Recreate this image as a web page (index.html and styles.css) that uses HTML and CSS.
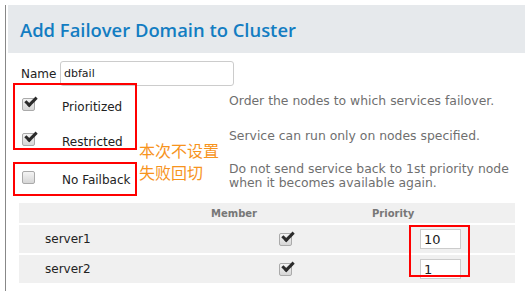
FILE: index.html
```html
<!DOCTYPE html>
<html lang="zh-CN">
<head>
  <meta charset="UTF-8">
  <title>Add Failover Domain to Cluster</title>
  <link rel="stylesheet" href="styles.css">
</head>
<body>
  <div class="panel">
    <div class="panel-header">
      <h1>Add Failover Domain to Cluster</h1>
    </div>

    <form class="domain-form">
      <div class="name-row">
        <label for="name">Name</label>
        <input type="text" id="name" class="name-input" value="dbfail">
      </div>

      <div class="opt">
        <span class="cb checked"></span>
        <span class="opt-label">Prioritized</span>
        <span class="opt-desc">Order the nodes to which services failover.</span>
      </div>
      <div class="opt">
        <span class="cb checked"></span>
        <span class="opt-label">Restricted</span>
        <span class="opt-desc">Service can run only on nodes specified.</span>
      </div>
      <div class="opt opt-last">
        <span class="cb"></span>
        <span class="opt-label">No Failback</span>
        <span class="opt-desc">Do not send service back to 1st priority node<br>when it becomes available again.</span>
      </div>

      <div class="members">
        <div class="mrow mhead">
          <div class="c-name"></div>
          <div class="c-member">Member</div>
          <div class="c-prio">Priority</div>
        </div>
        <div class="mrow">
          <div class="c-name">server1</div>
          <div class="c-member"><span class="cb checked"></span></div>
          <div class="c-prio"><input type="text" class="prio-input" value="10"></div>
        </div>
        <div class="mrow">
          <div class="c-name">server2</div>
          <div class="c-member"><span class="cb checked"></span></div>
          <div class="c-prio"><input type="text" class="prio-input" value="1"></div>
        </div>
      </div>
    </form>
  </div>

  <!-- annotations drawn over the screenshot -->
  <div class="mark mark-opts"></div>
  <div class="mark mark-failback"></div>
  <div class="mark mark-prio"></div>
  <div class="note">本次不设置<br>失败回切</div>
</body>
</html>
```

FILE: styles.css
```css
body {
  margin: 0;
  padding: 5px 0 0 5px;
  position: relative;
  font-family: "DejaVu Sans", sans-serif;
  color: #222;
  background: #fff;
}
.panel {
  border-left: 1px solid #888;
  min-height: 290px;
}
.panel-header {
  background-color: #e6e9ec;
  margin-left: 2px;
  height: 48px;
  display: flex;
  align-items: center;
  padding-left: 12px;
}
h1 {
  margin: 0;
  font-family: "Open Sans", sans-serif;
  font-weight: 600;
  font-size: 18.4px;
  color: #137dc2;
}
.domain-form {
  padding: 8px 9px 0 14px;
}
.name-row {
  display: flex;
  align-items: center;
  padding-left: 1px;
}
.name-row label {
  font-size: 12px;
  width: 39px;
}
.name-input {
  width: 174px;
  height: 25px;
  box-sizing: border-box;
  border: 1px solid #ccc;
  border-radius: 3px;
  padding: 0 3px;
  font-family: "DejaVu Sans", sans-serif;
  font-size: 11px;
  color: #222;
}

.opt {
  display: flex;
  align-items: flex-start;
  height: 35px;
}
.opt .cb {
  margin: 12px 0 0 2px;
}
.opt-label {
  width: 167px;
  margin: 14px 0 0 27px;
  font-size: 12px;
  line-height: 14px;
}
.opt-desc {
  margin-top: 8px;
  font-size: 12.4px;
  line-height: 14px;
  color: #6f6f6f;
}
.opt-last {
  height: 39px;
  margin-top: 4px;
}
.opt-last .cb {
  margin-top: 11px;
}
.opt-last .opt-label {
  margin-top: 13px;
}
.opt-last .opt-desc {
  margin-top: 2px;
}

/* checkbox look */
.cb {
  display: inline-block;
  position: relative;
  width: 11px;
  height: 11px;
  border: 1px solid #aaa;
  border-radius: 2px;
  background: linear-gradient(#f4f4f4, #d6d6d6);
  flex: none;
}
.cb.checked::after {
  content: "";
  position: absolute;
  left: 2px;
  top: -2px;
  width: 9px;
  height: 4px;
  border-left: 3px solid #2b2b2b;
  border-bottom: 3px solid #2b2b2b;
  transform: rotate(-45deg);
  transform-origin: 50% 50%;
}

.members {
  display: flex;
  flex-direction: column;
  gap: 2px;
  margin-top: 4px;
  margin-left: -1px;
  width: 496px;
}
.mrow {
  display: grid;
  grid-template-columns: 180px 130px 1fr;
  align-items: center;
  background-color: #f0f0f0;
  height: 28px;
  font-size: 12px;
}
.mhead {
  height: 20px;
  font-size: 10px;
  font-weight: bold;
  color: #777;
}
.c-name {
  padding-left: 26px;
}
.mhead .c-member {
  padding-left: 12px;
}
.mhead .c-prio {
  padding-left: 43px;
}
.c-member {
  padding-left: 80px;
  display: flex;
}
.c-prio {
  padding-left: 91px;
  display: flex;
}
.prio-input {
  width: 41px;
  height: 20px;
  box-sizing: border-box;
  border: 1px solid #ccc;
  padding: 0 3px;
  font-family: "DejaVu Sans", sans-serif;
  font-size: 13px;
  color: #222;
}

/* red annotation boxes */
.mark {
  position: absolute;
  border: 2px solid #f00;
  box-sizing: border-box;
}
.mark-opts {
  left: 13px;
  top: 83px;
  width: 124px;
  height: 67px;
}
.mark-failback {
  left: 13px;
  top: 162px;
  width: 124px;
  height: 34px;
}
.mark-prio {
  left: 409px;
  top: 225px;
  width: 61px;
  height: 52px;
}
.note {
  position: absolute;
  left: 139px;
  top: 139px;
  font-family: "Noto Sans CJK SC", sans-serif;
  font-size: 16px;
  line-height: 22px;
  color: #f7941d;
}
```
